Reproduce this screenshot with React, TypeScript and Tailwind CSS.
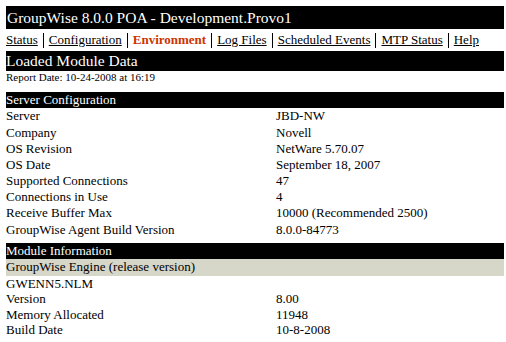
const nav = [
  { label: "Status" },
  { label: "Configuration" },
  { label: "Environment", active: true },
  { label: "Log Files" },
  { label: "Scheduled Events" },
  { label: "MTP Status" },
  { label: "Help" },
];

const serverRows = [
  ["Server", "JBD-NW"],
  ["Company", "Novell"],
  ["OS Revision", "NetWare 5.70.07"],
  ["OS Date", "September 18, 2007"],
  ["Supported Connections", "47"],
  ["Connections in Use", "4"],
  ["Receive Buffer Max", "10000 (Recommended 2500)"],
  ["GroupWise Agent Build Version", "8.0.0-84773"],
];

const moduleRows = [
  ["GWENN5.NLM", ""],
  ["Version", "8.00"],
  ["Memory Allocated", "11948"],
  ["Build Date", "10-8-2008"],
];

function Row({ k, v, tight }: { k: string; v: string; tight?: boolean }) {
  return (
    <div className={tight ? "flex h-[15.5px] items-center" : "flex h-[16.2px] items-center"}>
      <div className="w-[270px]">{k}</div>
      <div>{v}</div>
    </div>
  );
}

function Bar({ children }: { children: React.ReactNode }) {
  return <div className="flex h-[16px] items-center bg-black text-white">{children}</div>;
}

export default function App() {
  return (
    <div className="h-[342px] w-[506px] overflow-hidden bg-white pl-[6px] pr-[2px] pt-[6px] font-['Liberation_Serif',serif] text-[13px] text-black">
      <div className="flex h-[23px] items-center bg-black pl-px text-[15.5px] text-white">
        GroupWise 8.0.0 POA - Development.Provo1
      </div>

      <div className="flex h-[22px] items-center">
        {nav.map((n, i) => (
          <div key={n.label} className="flex items-center">
            {i > 0 && <span className="mx-[5px] block h-[15px] w-px bg-black" />}
            <span className={n.active ? "font-bold text-[#cc3300]" : "underline"}>{n.label}</span>
          </div>
        ))}
      </div>

      <div className="flex h-[20px] items-center bg-black text-[15.5px] text-white">Loaded Module Data</div>
      <div className="flex h-[13px] items-center text-[11px]">Report Date: 10-24-2008 at 16:19</div>

      <div className="mt-[8px]">
        <Bar>Server Configuration</Bar>
        {serverRows.map(([k, v]) => (
          <Row key={k} k={k} v={v} />
        ))}
      </div>

      <div className="mt-[5px]">
        <Bar>Module Information</Bar>
        <div className="flex h-[17px] items-center bg-[#d6d6c9]">GroupWise Engine (release version)</div>
        {moduleRows.map(([k, v]) => (
          <Row key={k} k={k} v={v} tight />
        ))}
      </div>
    </div>
  );
}
